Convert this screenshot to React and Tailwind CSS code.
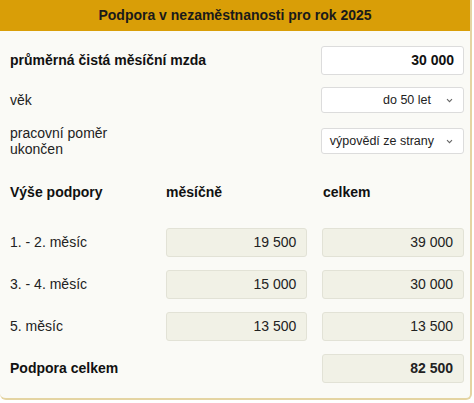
import React from "react";

const Chevron = ({ ml }) => (
  <svg width="7" height="5" viewBox="0 0 7 5" className={ml} fill="none" stroke="#666" strokeWidth="1.1">
    <path d="M1 1.2 L3.5 3.7 L6 1.2" />
  </svg>
);

const Box = ({ children, bold }) => (
  <div className={`h-[29px] w-[142px] rounded-[3px] border border-[#e2e2d6] bg-[#f1f1e6] px-[10px] flex items-center justify-end text-[14px] text-[#222] ${bold ? "font-bold" : ""}`}>
    {children}
  </div>
);

export default function App() {
  return (
    <div className="w-[474px] h-[403px] bg-white" style={{ fontFamily: '"Liberation Sans", Arial, sans-serif' }}>
      <div className="w-[472px] h-[400px] rounded-b-[6px] border-r-2 border-b-2 border-[#e4d4a2] bg-[#fafaf6] flex flex-col">
        <div className="h-[31px] bg-[#d99e07] flex items-center justify-center text-[14px] font-bold text-[#1a1a1a]">
          Podpora v nezaměstnanosti pro rok 2025
        </div>
        <div className="flex flex-col pl-[10px] pr-[6px]">
          <div className="flex items-center justify-between mt-[15px] h-[29px]">
            <span className="text-[14px] font-bold text-[#111]">průměrná čistá měsíční mzda</span>
            <div className="h-[29px] w-[143px] rounded-[3px] border border-[#dcdcdc] bg-white px-[9px] flex items-center justify-end text-[14px] font-bold text-[#111]">30 000</div>
          </div>
          <div className="flex items-center justify-between mt-[12px] h-[26px]">
            <span className="text-[14px] text-[#222]">věk</span>
            <div className="h-[26px] w-[143px] rounded-[3px] border border-[#dcdcdc] bg-white pr-[10px] flex items-center justify-end text-[12.5px] text-[#222] whitespace-nowrap">do 50 let<Chevron ml="ml-[15px]" /></div>
          </div>
          <div className="flex items-center justify-between mt-[15px] h-[26px]">
            <span className="text-[14px] leading-[16px] text-[#222]">pracovní poměr<br />ukončen</span>
            <div className="h-[26px] w-[143px] rounded-[3px] border border-[#dcdcdc] bg-white pr-[10px] flex items-center justify-end text-[12.5px] text-[#222] whitespace-nowrap">výpovědí ze strany<Chevron ml="ml-[12px]" /></div>
          </div>
          <div className="flex items-center mt-[28px] h-[20px] text-[14px] font-bold text-[#111]">
            <span className="w-[156px]">Výše podpory</span>
            <span className="w-[157px]">měsíčně</span>
            <span>celkem</span>
          </div>
          {[
            ["1. - 2. měsíc", "19 500", "39 000"],
            ["3. - 4. měsíc", "15 000", "30 000"],
            ["5. měsíc", "13 500", "13 500"],
          ].map(([l, a, b], i) => (
            <div key={l} className={`flex items-center ${i === 0 ? "mt-[26px]" : "mt-[13px]"}`}>
              <span className="w-[156px] text-[14px] text-[#222]">{l}</span>
              <Box>{a}</Box>
              <div className="w-[15px]" />
              <Box>{b}</Box>
            </div>
          ))}
          <div className="flex items-center justify-between mt-[13px]">
            <span className="text-[14px] font-bold text-[#111]">Podpora celkem</span>
            <Box bold>82 500</Box>
          </div>
        </div>
      </div>
    </div>
  );
}
